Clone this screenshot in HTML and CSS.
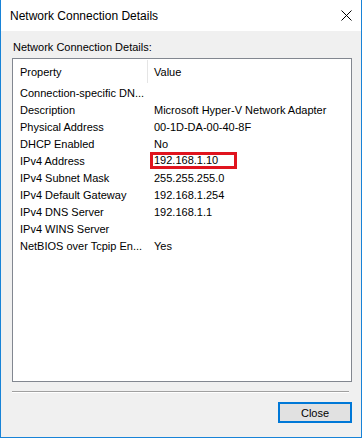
FILE: index.html
```html
<!DOCTYPE html>
<html lang="en">
  <head>
    <meta charset="UTF-8" />
    <title>Network Connection Details</title>
    <link rel="stylesheet" href="styles.css">
  </head>
  <body>
    <div class="window">
      <div class="titlebar">
        <span class="title">Network Connection Details</span>
        <svg class="close-x" width="11" height="11" viewBox="0 0 11 11">
          <path d="M0.5 0.5 L10.5 10.5 M10.5 0.5 L0.5 10.5" stroke="#000" stroke-width="1" fill="none" />
        </svg>
      </div>

      <div class="content">
        <div class="label">Network Connection Details:</div>

        <div class="listbox">
          <div class="list-header">
            <div class="col-prop">Property</div>
            <div class="col-value">Value</div>
          </div>
          <div class="row"><div class="col-prop">Connection-specific DN...</div><div class="col-value"></div></div>
          <div class="row"><div class="col-prop">Description</div><div class="col-value">Microsoft Hyper-V Network Adapter</div></div>
          <div class="row"><div class="col-prop">Physical Address</div><div class="col-value">00-1D-DA-00-40-8F</div></div>
          <div class="row"><div class="col-prop">DHCP Enabled</div><div class="col-value">No</div></div>
          <div class="row"><div class="col-prop">IPv4 Address</div><div class="col-value"><span class="highlight">192.168.1.10</span></div></div>
          <div class="row"><div class="col-prop">IPv4 Subnet Mask</div><div class="col-value">255.255.255.0</div></div>
          <div class="row"><div class="col-prop">IPv4 Default Gateway</div><div class="col-value">192.168.1.254</div></div>
          <div class="row"><div class="col-prop">IPv4 DNS Server</div><div class="col-value">192.168.1.1</div></div>
          <div class="row"><div class="col-prop">IPv4 WINS Server</div><div class="col-value"></div></div>
          <div class="row"><div class="col-prop">NetBIOS over Tcpip En...</div><div class="col-value">Yes</div></div>
        </div>

        <div class="separator"></div>

        <div class="buttons">
          <button class="close-button">Close</button>
        </div>
      </div>
    </div>
  </body>
</html>
```

FILE: styles.css
```css
* {
  margin: 0;
  padding: 0;
  box-sizing: border-box;
}

body {
  font-family: "Liberation Sans", Arial, sans-serif;
  font-size: 11px;
  color: #000;
  width: 362px;
  height: 438px;
  overflow: hidden;
}

.window {
  width: 362px;
  height: 438px;
  border: 1px solid #1883d7;
  border-top: none;
  display: flex;
  flex-direction: column;
  background: #f0f0f0;
}

.titlebar {
  height: 31px;
  background: #fff;
  display: flex;
  align-items: center;
  justify-content: space-between;
  padding: 0 9px 0 9px;
}

.title {
  font-size: 12px;
  padding-top: 1px;
}

.close-x {
  display: block;
  margin-top: -1px;
}

.content {
  flex: 1;
  padding: 8px 9px 0 11px;
  display: flex;
  flex-direction: column;
}

.label {
  line-height: 16px;
  padding-left: 1px;
}

.listbox {
  margin-top: 3px;
  height: 324px;
  background: #fff;
  border: 1px solid #828790;
}

.list-header {
  display: flex;
  height: 25px;
  align-items: center;
}

.list-header .col-prop {
  border-right: 1px solid #e5e5e5;
  height: 23px;
  display: flex;
  align-items: center;
}

.row {
  display: flex;
  height: 17px;
  align-items: center;
}

.col-prop {
  width: 135px;
  padding-left: 7px;
  white-space: nowrap;
  overflow: hidden;
}

.col-value {
  padding-left: 6px;
  white-space: nowrap;
}

.highlight {
  display: inline-block;
  border: 3px solid #e0141e;
  width: 87px;
  height: 17px;
  margin-left: -4px;
  padding-left: 1px;
  line-height: 11px;
}

.separator {
  margin-top: 9px;
  margin-right: 3px;
  height: 2px;
  border-top: 1px solid #a0a0a0;
  border-bottom: 1px solid #fff;
}

.buttons {
  display: flex;
  justify-content: flex-end;
  margin-top: 9px;
}

.close-button {
  width: 74px;
  height: 21px;
  font-family: "Liberation Sans", Arial, sans-serif;
  font-size: 11px;
  background: #e1e1e1;
  border: 2px solid #0078d7;
  color: #000;
}
```
